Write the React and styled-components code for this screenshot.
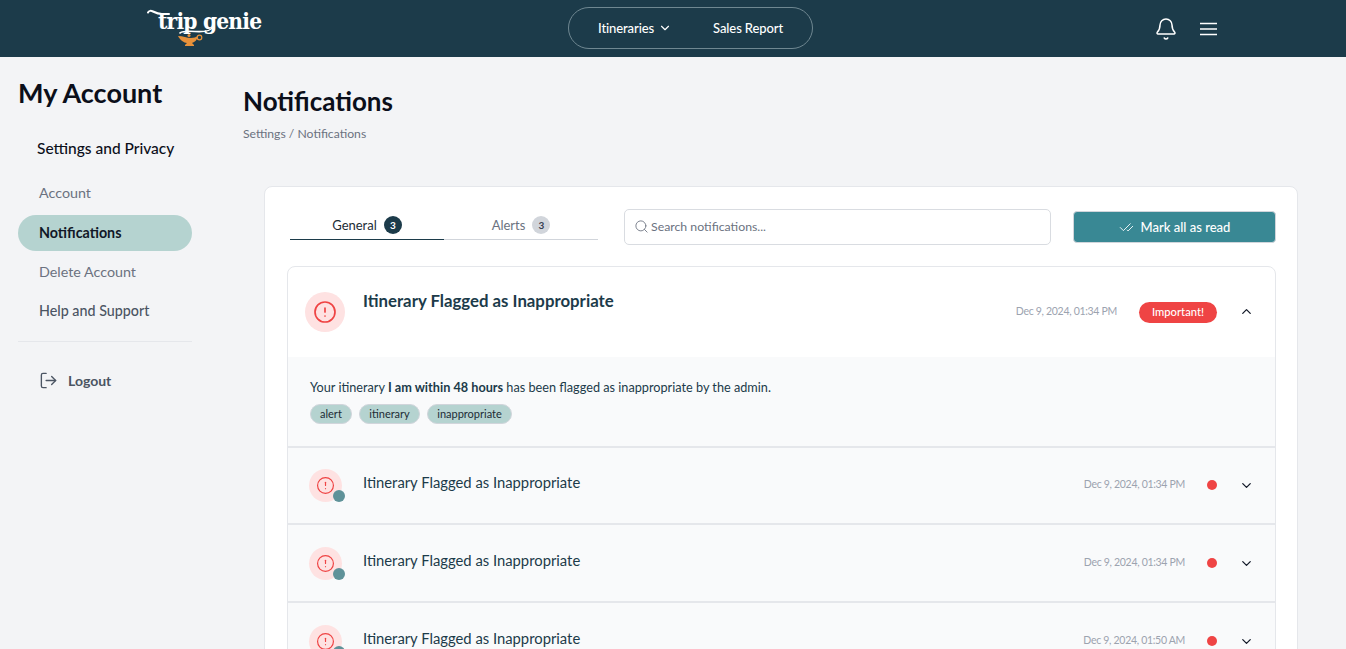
import React from "react";
import styled, { createGlobalStyle } from "styled-components";
import { Bell, ChevronDown, ChevronUp, CheckCheck, Search, LogOut, CircleAlert } from "lucide-react";

const notifications = [
  { id: 1, date: "Dec 9, 2024, 01:34 PM" },
  { id: 2, date: "Dec 9, 2024, 01:34 PM" },
  { id: 3, date: "Dec 9, 2024, 01:50 AM" },
];

export default function App() {
  return (
    <>
      <GlobalStyle />
      <Page>
        <TopBar>
          <Logo>
            <LogoText>trip genie</LogoText>
            <LogoArt width="120" height="50" viewBox="0 0 120 50" fill="none">
              <path d="M1 12.500c1-2 3-2 5-1s5 2.500 9 2.500h7" stroke="#fff" strokeWidth="2" strokeLinecap="round" />
              <path d="M66 27c-2 4-10 5-18 4.500s-13 0-15 1.500" stroke="#fff" strokeWidth="1.600" strokeLinecap="round" />
              <path d="M31 36c5 0 9 2 13 2 3 0 5-1 7-2-1 4-3 6-6 7l2 2v1h-9v-1l2-2c-3 0-7-3-9-7z" fill="#e8913a" />
              <circle cx="42" cy="35.500" r="1.500" fill="#e8913a" />
              <circle cx="52.500" cy="37.500" r="2.300" stroke="#e8913a" strokeWidth="1.200" />
            </LogoArt>
          </Logo>
          <NavPill>
            <NavItem>Itineraries <ChevronDown size={14} /></NavItem>
            <NavItem>Sales Report</NavItem>
          </NavPill>
          <TopIcons>
            <Bell size={24} strokeWidth={1.5} />
            <svg width="17" height="14" viewBox="0 0 17 14" fill="none" stroke="#fff" strokeWidth="1.700">
              <path d="M0 1.500h17M0 7h17M0 12.500h17" />
            </svg>
          </TopIcons>
        </TopBar>
        <Body>
          <Sidebar>
            <SideTitle>My Account</SideTitle>
            <SideHeading>Settings and Privacy</SideHeading>
            <SideLink>Account</SideLink>
            <SideLink $active>Notifications</SideLink>
            <SideLink>Delete Account</SideLink>
            <SideLink $strong>Help and Support</SideLink>
            <SideRule />
            <LogoutRow><LogOut size={19} strokeWidth={1.7} /> Logout</LogoutRow>
          </Sidebar>
          <Main>
            <PageTitle>Notifications</PageTitle>
            <Crumbs>Settings / Notifications</Crumbs>
            <Card>
              <Toolbar>
                <Tabs>
                  <Tab $active>General <Count $active>3</Count></Tab>
                  <Tab>Alerts <Count>3</Count></Tab>
                </Tabs>
                <SearchBox>
                  <Search size={15} strokeWidth={1.4} color="#6b7280" />
                  <span>Search notifications...</span>
                </SearchBox>
                <MarkButton><CheckCheck size={15} strokeWidth={1.4} /> Mark all as read</MarkButton>
              </Toolbar>
              <List>
                <OpenHead>
                  <IconCircle $big><CircleAlert size={24} strokeWidth={1.7} /></IconCircle>
                  <OpenTitle>Itinerary Flagged as Inappropriate</OpenTitle>
                  <OpenDate>Dec 9, 2024, 01:34 PM</OpenDate>
                  <Important>Important!</Important>
                  <Toggle $top={12}><ChevronUp size={15} /></Toggle>
                </OpenHead>
                <Details>
                  <p>Your itinerary <b>I am within 48 hours</b> has been flagged as inappropriate by the admin.</p>
                  <Tags>
                    <Tag>alert</Tag>
                    <Tag>itinerary</Tag>
                    <Tag>inappropriate</Tag>
                  </Tags>
                </Details>
                {notifications.map((n) => (
                  <Row key={n.id}>
                    <IconCircle>
                      <CircleAlert size={19} strokeWidth={1.5} />
                      <UnreadDot />
                    </IconCircle>
                    <RowTitle>Itinerary Flagged as Inappropriate</RowTitle>
                    <RowDate>{n.date}</RowDate>
                    <RedDot />
                    <Toggle $top={9}><ChevronDown size={15} /></Toggle>
                  </Row>
                ))}
              </List>
            </Card>
          </Main>
        </Body>
      </Page>
    </>
  );
}

const GlobalStyle = createGlobalStyle`
  html, body { margin: 0; height: 100%; overflow: hidden; }
  body { font-family: "Lato", "Noto Sans", sans-serif; background: #f3f4f6; color: #111827; }
  * { box-sizing: border-box; }
`;
const Page = styled.div`
  height: 100vh;
  overflow: hidden;
  display: flex;
  flex-direction: column;
`;
const TopBar = styled.header`
  height: 57px;
  flex: none;
  background: #1c3b4a;
  color: #fff;
  display: flex;
  align-items: center;
  padding: 0 129px 0 147px;
`;
const Logo = styled.div`
  width: 421px;
  height: 57px;
  position: relative;
`;
const LogoText = styled.div`
  font-family: "DejaVu Serif Condensed", "DejaVu Serif", serif;
  font-weight: 700;
  font-size: 22.5px;
  letter-spacing: -0.8px;
  line-height: 26px;
  padding: 8px 0 0 11px;
  white-space: nowrap;
`;
const LogoArt = styled.svg`
  position: absolute;
  left: 0;
  top: 0;
`;
const NavPill = styled.nav`
  width: 245px;
  height: 42px;
  margin-top: -1px;
  border: 1px solid #6f8791;
  border-radius: 21px;
  display: flex;
  align-items: center;
  gap: 41px;
  padding-left: 29px;
`;
const NavItem = styled.span`
  display: inline-flex;
  align-items: center;
  gap: 4px;
  font-size: 13px;
  font-weight: 500;
  letter-spacing: -0.1px;
  white-space: nowrap;
`;
const TopIcons = styled.div`
  margin-left: auto;
  display: flex;
  align-items: center;
  gap: 22px;
`;
const Body = styled.div`
  flex: 1;
  display: flex;
  min-height: 0;
`;
const Sidebar = styled.aside`
  width: 243px;
  flex: none;
  padding: 18px 51px 0 18px;
`;
const SideTitle = styled.h2`
  margin: 0 0 27px;
  font-size: 27px;
  line-height: 36px;
  font-weight: 700;
  color: #0b0f1a;
`;
const SideHeading = styled.div`
  margin: 0 0 17px 19px;
  font-size: 15.5px;
  line-height: 20px;
  font-weight: 500;
  color: #0b0f1a;
`;
const SideLink = styled.div`
  height: 36px;
  margin-bottom: 3px;
  padding: 0 0 2px 21px;
  display: flex;
  align-items: center;
  font-size: 14.3px;
  border-radius: 18px;
  color: ${(p) => (p.$active ? "#111827" : p.$strong ? "#4b5563" : "#6b7280")};
  font-weight: ${(p) => (p.$active ? 700 : p.$strong ? 500 : 400)};
  background: ${(p) => (p.$active ? "#b5d3d0" : "transparent")};
  ${SideHeading} + & {
    margin-bottom: 4px;
  }
`;
const SideRule = styled.div`
  height: 1px;
  margin-top: 12px;
  background: #e5e7eb;
`;
const LogoutRow = styled.div`
  display: flex;
  align-items: center;
  gap: 10px;
  margin-top: 29px;
  padding-left: 21px;
  font-size: 14px;
  font-weight: 700;
  color: #4b5563;
`;
const Main = styled.main`
  flex: 1;
  min-width: 0;
  padding: 26px 48px 0 0;
`;
const PageTitle = styled.h1`
  margin: 0;
  font-size: 26px;
  line-height: 36px;
  font-weight: 700;
  color: #0b0f1a;
`;
const Crumbs = styled.div`
  margin-top: 7px;
  font-size: 12.2px;
  line-height: 16px;
  color: #6b7280;
`;
const Card = styled.section`
  margin: 44px 0 0 21px;
  background: #fff;
  border: 1px solid #e5e7eb;
  border-radius: 8px;
  padding: 22px 21px 0 22px;
  height: 600px;
`;
const Toolbar = styled.div`
  display: flex;
  align-items: flex-start;
  height: 37px;
`;
const Tabs = styled.div`
  width: 308px;
  margin-left: 3px;
  height: 31px;
  display: flex;
`;
const Tab = styled.div`
  flex: 1;
  display: flex;
  align-items: center;
  justify-content: center;
  gap: 7px;
  padding-top: 2px;
  font-size: 13px;
  color: ${(p) => (p.$active ? "#1c2c36" : "#6b7280")};
  border-bottom: 1px solid ${(p) => (p.$active ? "#1c3b4a" : "#d1d5db")};
`;
const Count = styled.span`
  width: 18px;
  height: 18px;
  border-radius: 50%;
  display: inline-flex;
  align-items: center;
  justify-content: center;
  font-size: 10px;
  font-weight: 700;
  background: ${(p) => (p.$active ? "#1c3b4a" : "#d1d5db")};
  color: ${(p) => (p.$active ? "#fff" : "#374151")};
`;
const SearchBox = styled.div`
  width: 427px;
  height: 36px;
  margin-left: 26px;
  border: 1px solid #d9dce1;
  border-radius: 5px;
  display: flex;
  align-items: center;
  gap: 2px;
  padding: 0 0 1px 9px;
  font-size: 12.3px;
  color: #6b7280;
`;
const MarkButton = styled.button`
  width: 203px;
  height: 32px;
  margin: 2px 0 0 22px;
  border: 1px solid #d1d5db;
  border-radius: 4px;
  background: #398894;
  color: #fff;
  font: 500 13px "Lato", sans-serif;
  display: flex;
  align-items: center;
  justify-content: center;
  gap: 7px;
`;
const List = styled.div`
  margin-top: 20px;
  border: 1px solid #e5e7eb;
  border-radius: 8px;
  overflow: hidden;
`;
const OpenHead = styled.div`
  height: 90px;
  padding: 25px 14px 0 17px;
  display: flex;
  align-items: flex-start;
`;
const IconCircle = styled.div`
  position: relative;
  flex: none;
  width: ${(p) => (p.$big ? "40px" : "33px")};
  height: ${(p) => (p.$big ? "40px" : "33px")};
  border-radius: 50%;
  background: #fee2e2;
  color: #ef4444;
  display: flex;
  align-items: center;
  justify-content: center;
`;
const UnreadDot = styled.span`
  position: absolute;
  right: -3px;
  bottom: 0;
  width: 12px;
  height: 12px;
  border-radius: 50%;
  background: #5f9299;
`;
const OpenTitle = styled.div`
  margin: -2px 0 0 18px;
  font-size: 16.800px;
  line-height: 22px;
  font-weight: 700;
  color: #1c3b4a;
`;
const OpenDate = styled.div`
  margin: 12px 0 0 auto;
  font-size: 10.5px;
  letter-spacing: -0.3px;
  line-height: 14px;
  color: #9ca3af;
`;
const Important = styled.span`
  width: 78px;
  height: 21px;
  margin: 10px 14px 0 22px;
  padding-bottom: 2px;
  border-radius: 11px;
  background: #ef4444;
  color: #fff;
  font-size: 11.2px;
  font-weight: 500;
  display: flex;
  align-items: center;
  justify-content: center;
`;
const Toggle = styled.span`
  width: 30px;
  flex: none;
  margin-top: ${(p) => p.$top}px;
  display: flex;
  justify-content: center;
  color: #111827;
`;
const Details = styled.div`
  height: 91px;
  padding: 22px 22px 0;
  background: #f9fafb;
  border-bottom: 2px solid #e5e7eb;
  font-size: 12.7px;
  line-height: 16px;
  color: #1c3b4a;
  p { margin: 0; }
`;
const Tags = styled.div`
  display: flex;
  gap: 7.500px;
  margin-top: 9px;
`;
const Tag = styled.span`
  height: 20px;
  padding: 0 9px;
  display: flex;
  align-items: center;
  border: 1px solid #d1d5db;
  border-radius: 10px;
  background: #b5d3d0;
  color: #1c2c36;
  font-size: 11px;
`;
const Row = styled.div`
  height: 78px;
  padding: 22px 14px 0 21px;
  background: #f9fafb;
  border-bottom: 2px solid #e5e7eb;
  display: flex;
  align-items: flex-start;
  ${Details} + & {
    height: 77px;
    padding-top: 21px;
  }
`;
const RowTitle = styled.div`
  margin: 3px 0 0 21px;
  font-size: 14.800px;
  line-height: 20px;
  color: #1c3b4a;
`;
const RowDate = styled.div`
  margin: 8px 0 0 auto;
  font-size: 10.5px;
  letter-spacing: -0.3px;
  line-height: 14px;
  color: #9ca3af;
`;
const RedDot = styled.span`
  width: 10px;
  height: 10px;
  margin: 11px 14px 0 22px;
  border-radius: 50%;
  background: #ef4444;
`;
